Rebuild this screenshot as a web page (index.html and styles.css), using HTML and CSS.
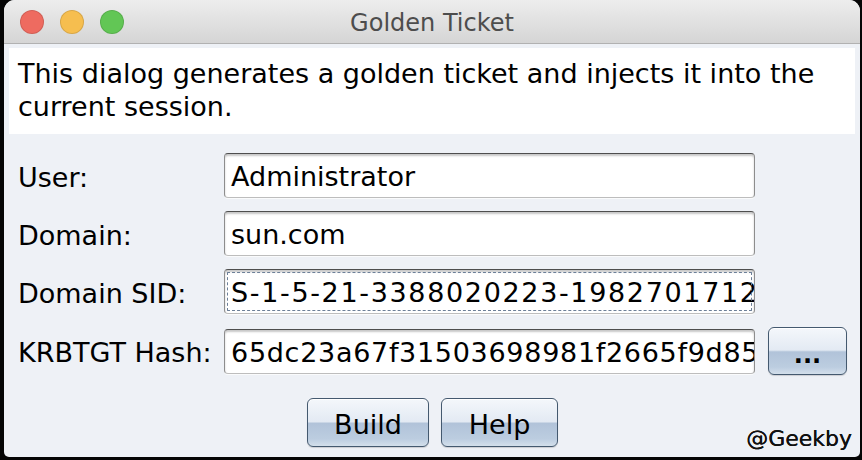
FILE: index.html
```html
<!DOCTYPE html>
<html>
<head>
<meta charset="utf-8">
<link rel="stylesheet" href="styles.css">
</head>
<body>
<div class="window">
  <div class="titlebar">
    <div class="lights">
      <span class="light red"></span>
      <span class="light yellow"></span>
      <span class="light green"></span>
    </div>
    <div class="title">Golden Ticket</div>
  </div>
  <div class="desc">This dialog generates a golden ticket and injects it into the current session.</div>
  <div class="form">
    <div class="row">
      <div class="label">User:</div>
      <div class="field">Administrator</div>
    </div>
    <div class="row">
      <div class="label">Domain:</div>
      <div class="field">sun.com</div>
    </div>
    <div class="row">
      <div class="label">Domain SID:</div>
      <div class="field focused sid">S-1-5-21-3388020223-1982701712-4050354029</div>
    </div>
    <div class="row row-tall">
      <div class="label">KRBTGT Hash:</div>
      <div class="field hash">65dc23a67f31503698981f2665f9d85e</div>
      <div class="btn btn-small">...</div>
    </div>
  </div>
  <div class="buttons">
    <div class="btn btn-build">Build</div>
    <div class="btn btn-help">Help</div>
  </div>
  <div class="watermark">@Geekby</div>
</div>
</body>
</html>
```

FILE: styles.css
```css
html, body {
  margin: 0;
  padding: 0;
  background: #050505;
  width: 862px;
  height: 460px;
  overflow: hidden;
}

.window {
  position: relative;
  margin-left: 4px;
  width: 856px;
  height: 457px;
  border-radius: 11px 11px 5px 5px;
  overflow: hidden;
  background: #eef1f6;
  font-family: "DejaVu Sans", "Liberation Sans", sans-serif;
  font-size: 27px;
  color: #000;
  display: flex;
  flex-direction: column;
}

.titlebar {
  position: relative;
  height: 43px;
  flex: none;
  background: linear-gradient(#ededed, #d5d5d5);
  border-bottom: 1px solid #b1b1b1;
  display: flex;
  align-items: center;
  justify-content: center;
}

.lights {
  position: absolute;
  left: 16px;
  top: 10px;
  display: flex;
  gap: 16px;
}

.light {
  width: 22px;
  height: 22px;
  border-radius: 50%;
  border: 1px solid rgba(0,0,0,0.12);
}

.red { background: #ee6b60; }
.yellow { background: #f6be4f; }
.green { background: #62c655; }

.title {
  font-size: 24px;
  color: #4d4d4d;
  line-height: 43px;
  padding-top: 3px;
}

.desc {
  margin: 4px 5px 0;
  background: #fff;
  height: 66px;
  padding: 9px 9px 11px;
  line-height: 33px;
}

.form {
  margin-top: 19px;
  padding-left: 14px;
  display: flex;
  flex-direction: column;
  gap: 13px;
}

.row {
  display: flex;
  align-items: center;
  height: 45px;
}

.row-tall {
  height: 48px;
}

.label {
  width: 206px;
  flex: none;
  padding-top: 3px;
}

.field {
  box-sizing: border-box;
  width: 531px;
  height: 45px;
  flex: none;
  background: #fff;
  border: 1px solid #8d8d8d;
  border-top-color: #4e4e4e;
  border-bottom-color: #bdbdbd;
  border-radius: 4px;
  box-shadow: inset 0 2px 2px rgba(0,0,0,0.22), 0 1px 0 rgba(255,255,255,0.7);
  padding: 2px 6px 0;
  line-height: 42px;
  white-space: nowrap;
  overflow: hidden;
}

.sid {
  letter-spacing: 1.65px;
}

.hash {
  letter-spacing: 0.7px;
}

.focused {
  outline: 1px dashed #6c7f98;
  outline-offset: -4px;
}

.btn {
  box-sizing: border-box;
  flex: none;
  display: flex;
  align-items: center;
  justify-content: center;
  border: 1px solid #44596f;
  border-radius: 6px;
  background: linear-gradient(#f4f7fb 0%, #e3eaf3 48%, #b1c3d9 52%, #bccde0 85%, #d3dfeb 100%);
  box-shadow: inset 0 1px 0 #fff, 0 1px 1px rgba(0,0,0,0.15);
  color: #000;
  padding-top: 3px;
}

.btn-small {
  width: 79px;
  height: 48px;
  margin-left: 13px;
  font-size: 24px;
  font-weight: bold;
  padding-top: 8px;
}

.buttons {
  margin-top: 23px;
  display: flex;
  justify-content: center;
  gap: 12px;
  padding-left: 1px;
}

.btn-build {
  width: 122px;
  height: 49px;
}

.btn-help {
  width: 117px;
  height: 49px;
}

.watermark {
  position: absolute;
  right: 8px;
  bottom: 6px;
  font-size: 22px;
  color: #111;
  text-shadow: 0 0 0.5px #000;
}
```
